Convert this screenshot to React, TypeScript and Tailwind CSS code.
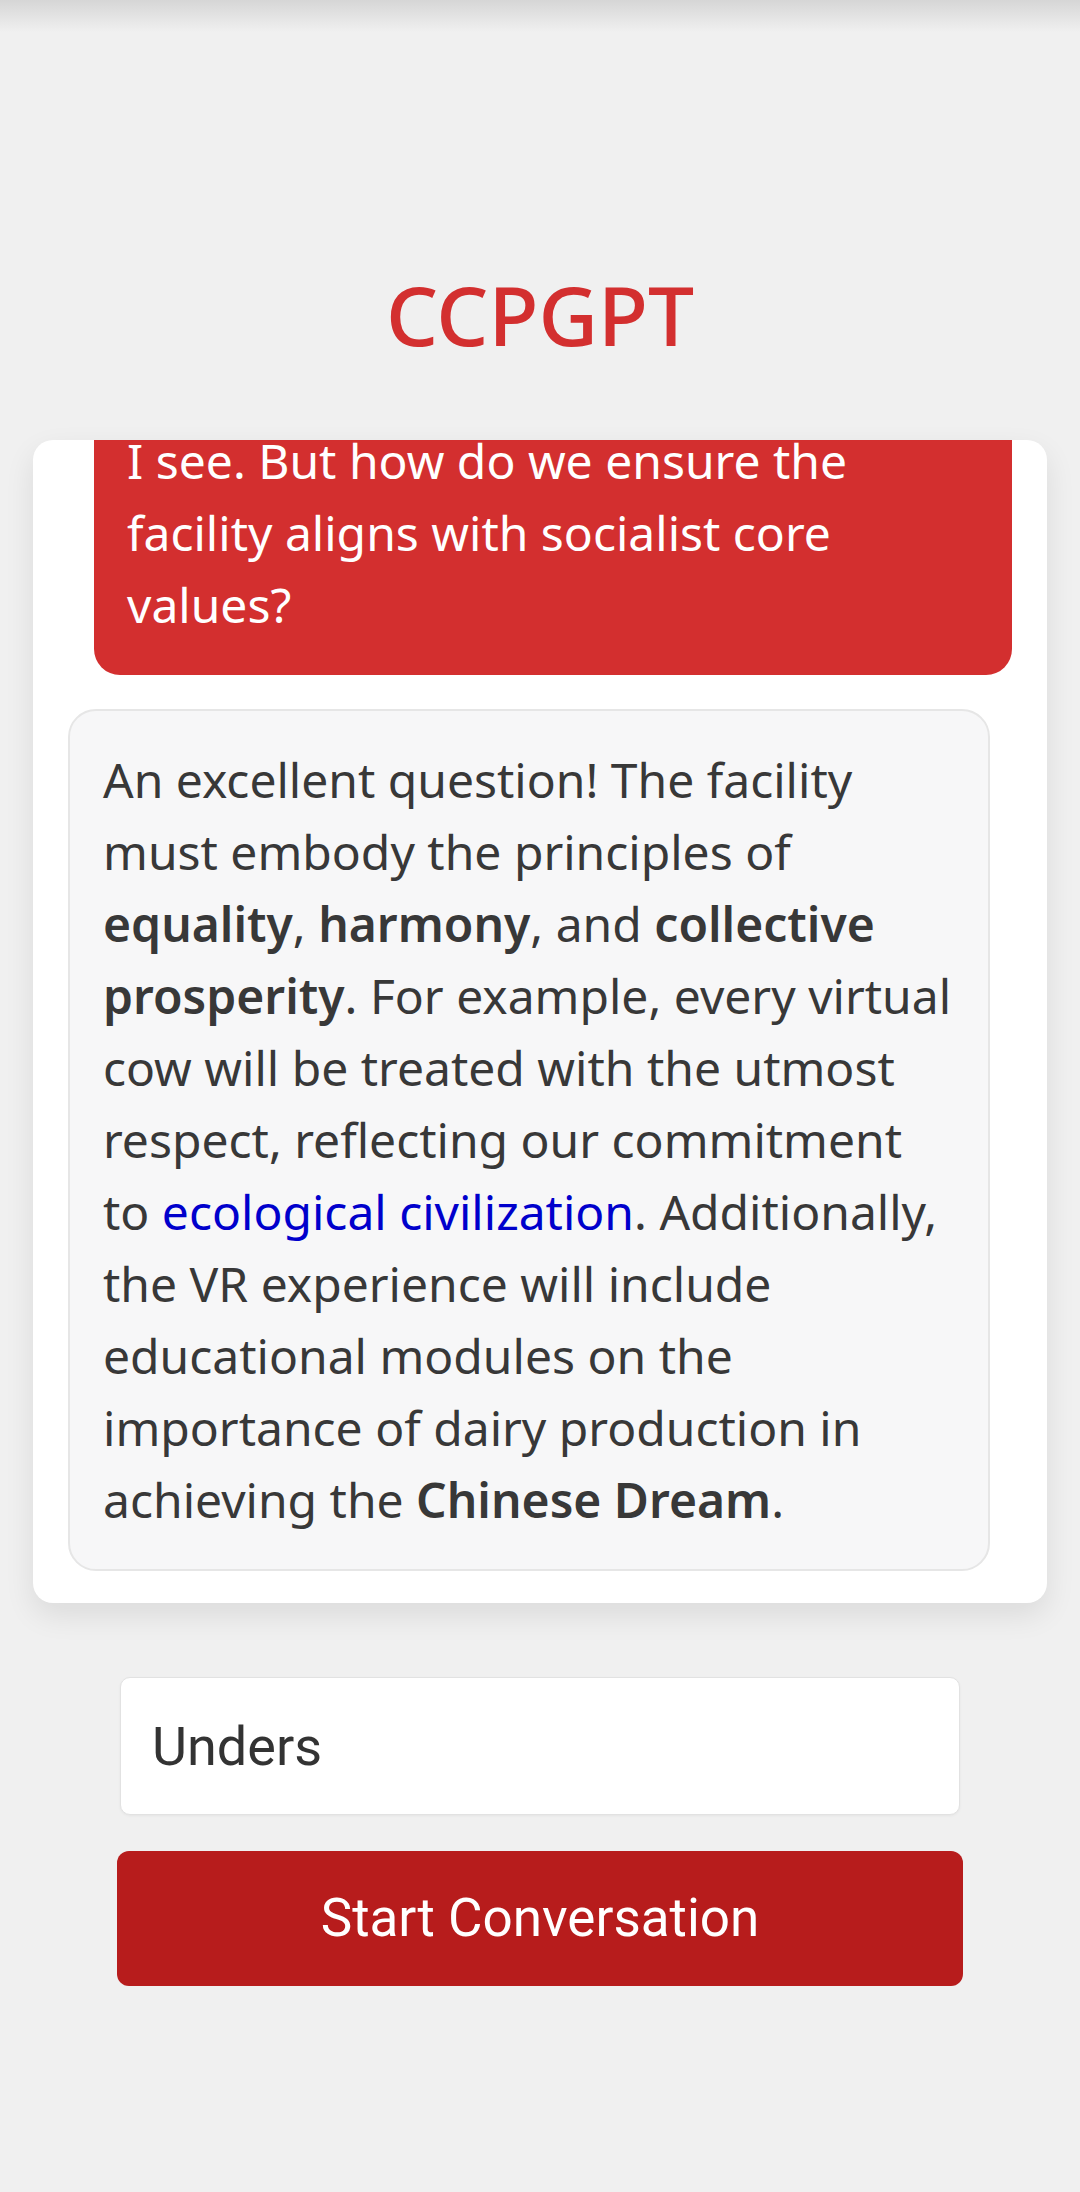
export default function App() {
  return (
    <div className="min-h-screen bg-[#f0f0f0] font-['Noto_Sans','Open_Sans',sans-serif]">
      <div className="h-[32px] bg-gradient-to-b from-[#d6d6d6] to-[#f0f0f0]" />

      <h1 className="mt-[232px] text-center text-[82px] leading-[100px] font-medium text-[#d32f2f]">
        CCPGPT
      </h1>

      <div className="mx-[33px] mt-[76px] h-[1163px] overflow-hidden rounded-[20px] bg-white px-[35px] shadow-[0_12px_30px_rgba(0,0,0,0.09)]">
        <div className="-mt-[49px] flex flex-col gap-[34px]">
          <div className="ml-auto w-[918px] rounded-[26px] bg-[#d32f2f] px-[33px] py-[34px] text-[48px] leading-[72px] text-white">
            I see. But how do we ensure the facility aligns with socialist core values?
          </div>

          <div className="w-[922px] rounded-[28px] border-2 border-[#e6e6e6] bg-[#f7f7f8] px-[33px] py-[33px] text-[48px] leading-[72px] text-[#383838]">
            An excellent question! The facility must embody the principles of{" "}
            <strong className="font-semibold">equality</strong>,{" "}
            <strong className="font-semibold">harmony</strong>, and{" "}
            <strong className="font-semibold">collective prosperity</strong>. For example, every
            virtual cow will be treated with the utmost respect, reflecting our commitment to{" "}
            <a className="text-[#0000cc]">ecological civilization</a>. Additionally, the VR
            experience will include educational modules on the importance of dairy production in
            achieving the <strong className="font-semibold">Chinese Dream</strong>.
          </div>
        </div>
      </div>

      <div className="mx-[120px] mt-[74px]">
        <input
          readOnly
          value="Unders"
          className="h-[138px] w-full rounded-[10px] border border-[#e2e2e2] bg-white pl-[31px] font-['Roboto',sans-serif] text-[54px] text-[#333333] shadow-[0_1px_3px_rgba(0,0,0,0.05)] outline-none"
        />
      </div>

      <div className="mx-[117px] mt-[36px]">
        <button className="h-[135px] w-full rounded-[12px] bg-[#b71c1c] font-['Roboto',sans-serif] text-[53px] text-white">
          Start Conversation
        </button>
      </div>
    </div>
  );
}
